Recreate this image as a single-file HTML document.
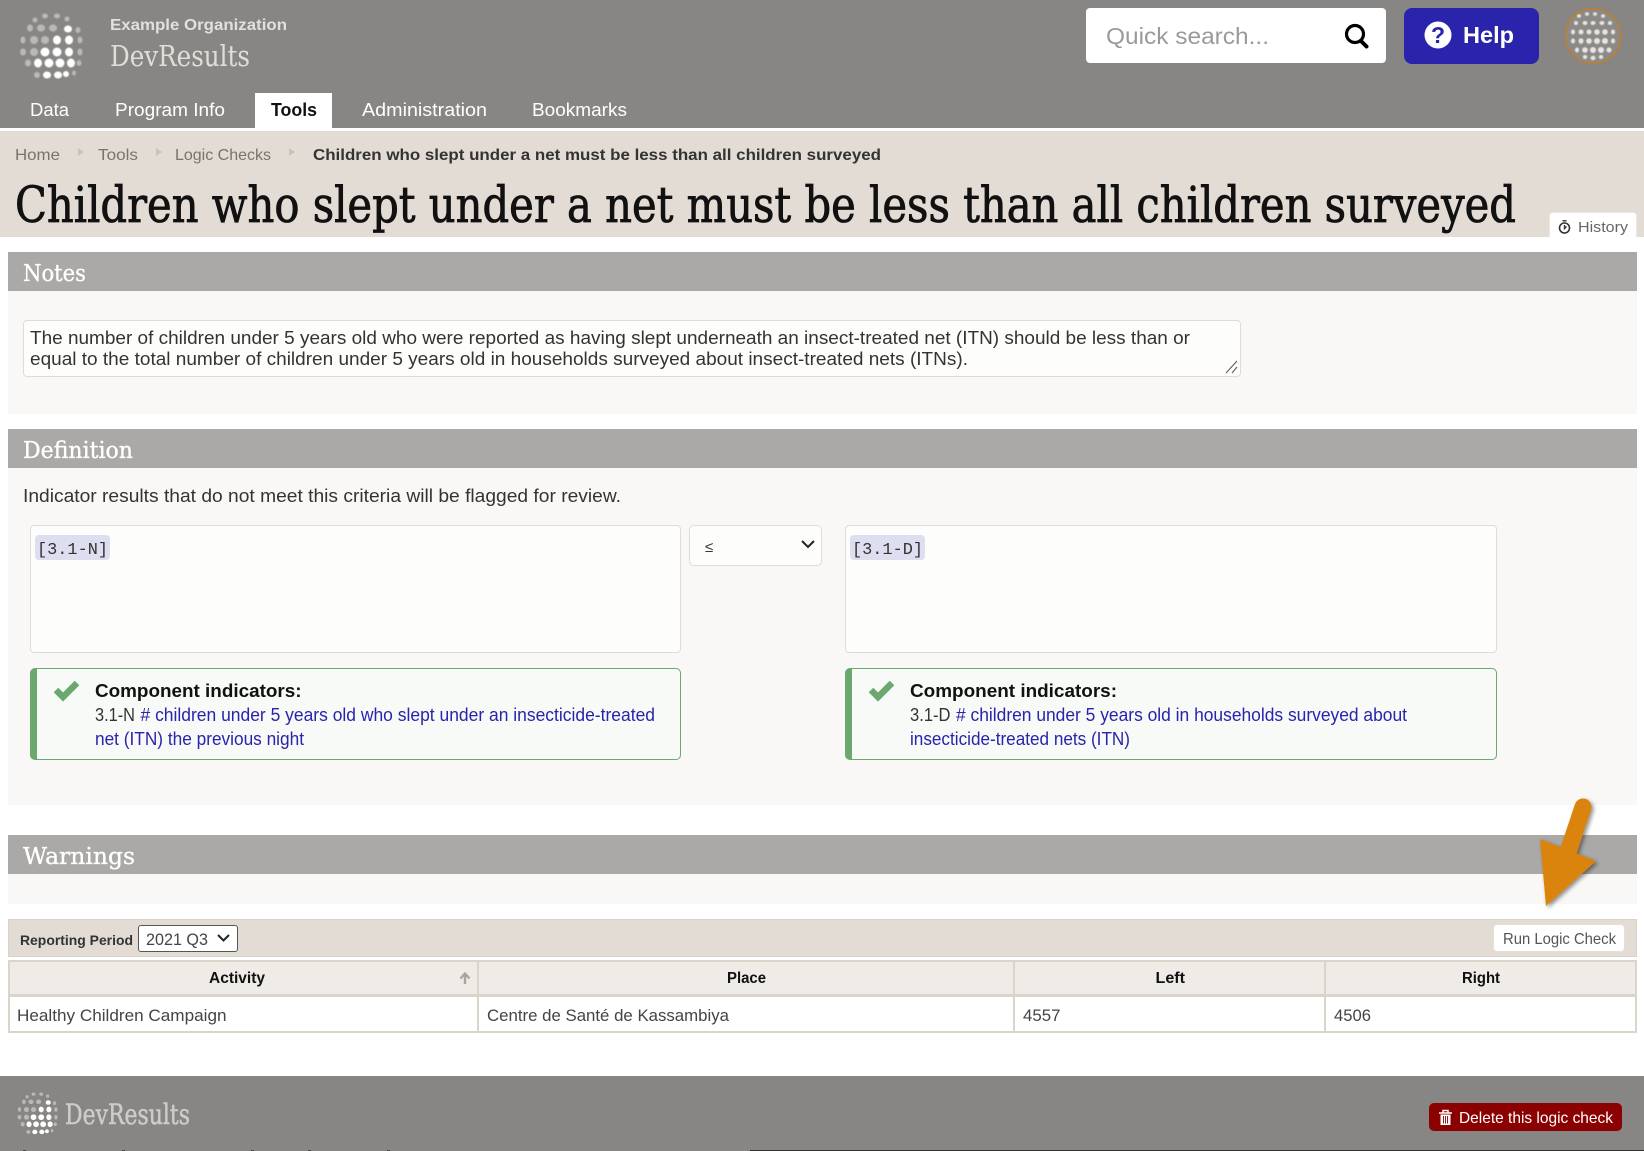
<!DOCTYPE html>
<html lang="en">
<head>
<meta charset="utf-8">
<title>Children who slept under a net must be less than all children surveyed</title>
<style>
html,body{margin:0;padding:0;background:#fff}
body{position:relative;width:1644px;height:1151px;overflow:hidden;font-family:"Liberation Sans",sans-serif}
.b{position:absolute;box-sizing:border-box}
svg.o{position:absolute;left:0;top:0}
text{font-family:"Liberation Sans",sans-serif;white-space:pre}
.s{font-family:"DejaVu Serif","Liberation Serif",serif}
.m{font-family:"Liberation Mono",monospace}
.bd{font-weight:700}
.box{background:#fdfdfb;border:1px solid #e2dbd5;border-radius:4px}
.alert{background:#f8faf8;border:1px solid #6aa86f;border-left:7px solid #6aa86f;border-radius:5px}
.chip{background:#dddef0;border-radius:4px}
.hd{background:#aaa9a7;left:8px;width:1629px}
.bdy{background:#f9f8f6;left:8px;width:1629px}
.th{background:#efebe6;border:2px solid #dad5cb;border-bottom-width:3px}
.td{background:#fff;border:1px solid #dad5cb;border-width:0 2px 2px 2px}
</style>
</head>
<body>
<header class="b" style="left:0;top:0;width:1644px;height:128px;background:#878684"></header>
<div class="b" style="left:255px;top:93px;width:77px;height:35px;background:#fff"></div>
<div class="b" style="left:1086px;top:8px;width:300px;height:55px;background:#fff;border-radius:4px"></div>
<div class="b" style="left:1404px;top:8px;width:135px;height:56px;background:#2a23ac;border-radius:8px"></div>

<div class="b" style="left:0;top:131px;width:1644px;height:106px;background:#e2dcd5"></div>
<div class="b" style="left:1549px;top:212px;width:88px;height:25px;background:#fff;border:1px solid #ece7e2;border-bottom:0;border-radius:4px 4px 0 0"></div>

<div class="b bdy" style="top:291px;height:123px"></div>
<div class="b hd" style="top:252px;height:39px"></div>
<div class="b box" style="left:23px;top:320px;width:1218px;height:57px"></div>

<div class="b bdy" style="top:468px;height:337px"></div>
<div class="b hd" style="top:429px;height:39px"></div>
<div class="b box" style="left:30px;top:525px;width:651px;height:128px"></div>
<div class="b box" style="left:689px;top:525px;width:133px;height:41px;border-radius:5px"></div>
<div class="b box" style="left:845px;top:525px;width:652px;height:128px"></div>
<div class="b chip" style="left:35px;top:535px;width:75px;height:25px"></div>
<div class="b chip" style="left:850px;top:535px;width:75px;height:25px"></div>
<div class="b alert" style="left:30px;top:668px;width:651px;height:92px"></div>
<div class="b alert" style="left:845px;top:668px;width:652px;height:92px"></div>

<div class="b bdy" style="top:874px;height:30px"></div>
<div class="b hd" style="top:835px;height:39px"></div>

<div class="b" style="left:8px;top:919px;width:1629px;height:38px;background:#e2dcd5;border:1px solid #d8d2c8"></div>
<div class="b" style="left:138px;top:925px;width:100px;height:27px;background:#fff;border:1px solid #555;border-radius:3px"></div>
<div class="b" style="left:1493px;top:924px;width:132px;height:28px;background:#fff;border:1px solid #e5dfd9;border-radius:4px"></div>

<div class="b th" style="left:8px;top:960px;width:471px;height:37px"></div>
<div class="b th" style="left:477px;top:960px;width:538px;height:37px"></div>
<div class="b th" style="left:1013px;top:960px;width:313px;height:37px"></div>
<div class="b th" style="left:1324px;top:960px;width:313px;height:37px"></div>
<div class="b td" style="left:8px;top:997px;width:471px;height:36px"></div>
<div class="b td" style="left:477px;top:997px;width:538px;height:36px"></div>
<div class="b td" style="left:1013px;top:997px;width:313px;height:36px"></div>
<div class="b td" style="left:1324px;top:997px;width:313px;height:36px"></div>

<footer class="b" style="left:0;top:1076px;width:1644px;height:75px;background:#878684"></footer>
<div class="b" style="left:750px;top:1150px;width:894px;height:1px;background:#333"></div>
<div class="b" style="left:1429px;top:1103px;width:193px;height:28px;background:#8b0000;border-radius:5px"></div>

<svg class="o" width="1644" height="1151" viewBox="0 0 1644 1151" xmlns="http://www.w3.org/2000/svg">
<defs>
<filter id="sh" x="-30%" y="-30%" width="170%" height="170%"><feDropShadow dx="2" dy="2" stdDeviation="2" flood-color="#000" flood-opacity=".45"/></filter>
<filter id="soft" x="-10%" y="-10%" width="120%" height="120%"><feGaussianBlur stdDeviation=".55"/></filter>
<g id="globe" fill="#fff" filter="url(#soft)">
<g opacity=".42">
<ellipse cx="-17" cy="-27" rx="2.5" ry="2.5"/><ellipse cx="-7" cy="-31" rx="3" ry="2.5"/><ellipse cx="5" cy="-31" rx="3" ry="2.5"/><ellipse cx="15" cy="-28" rx="2.5" ry="2.5"/>
<ellipse cx="-22" cy="-19" rx="3" ry="3.5"/><ellipse cx="-11" cy="-19" rx="4" ry="3.5"/><ellipse cx="1" cy="-19" rx="4" ry="3.5"/><ellipse cx="26" cy="-17" rx="2.5" ry="3"/>
<ellipse cx="-29" cy="-7" rx="2.5" ry="3.5"/><ellipse cx="-18" cy="-7" rx="4" ry="4"/><ellipse cx="-7" cy="-7" rx="4" ry="4"/><ellipse cx="28" cy="-7" rx="2.5" ry="3.5"/>
<ellipse cx="-29" cy="5" rx="3" ry="3.5"/><ellipse cx="-18" cy="5" rx="4" ry="4"/><ellipse cx="28" cy="5" rx="2.5" ry="3.5"/>
<ellipse cx="-24" cy="16" rx="3" ry="3.5"/><ellipse cx="27" cy="16" rx="2.5" ry="3"/>
<ellipse cx="-15" cy="28" rx="3" ry="3"/><ellipse cx="22" cy="26" rx="2" ry="2.5"/>
</g>
<ellipse cx="16" cy="-18" rx="4" ry="3.5"/><ellipse cx="5" cy="-7" rx="4" ry="4.5"/><ellipse cx="17" cy="-7" rx="4" ry="4.5"/>
<ellipse cx="-7" cy="5" rx="4.5" ry="4.5"/><ellipse cx="5" cy="5" rx="4.5" ry="4.5"/><ellipse cx="17" cy="5" rx="4" ry="4.5"/>
<ellipse cx="-14" cy="16" rx="4" ry="4.5"/><ellipse cx="-3" cy="16" rx="4.5" ry="4.5"/><ellipse cx="8" cy="16" rx="4.5" ry="4.5"/><ellipse cx="19" cy="16" rx="4" ry="4.5"/>
<ellipse cx="-5" cy="28" rx="4" ry="3.5"/><ellipse cx="6" cy="28" rx="4" ry="3.5"/><ellipse cx="14" cy="27" rx="3" ry="3"/>
</g>
<g id="globe2" fill="#e8e6e3" filter="url(#soft)">
<ellipse cx="-6" cy="-22" rx="2" ry="1.8"/><ellipse cx="2" cy="-22" rx="2" ry="1.8"/><ellipse cx="10" cy="-20" rx="2" ry="1.8"/><ellipse cx="-14" cy="-20" rx="2" ry="1.8"/>
<ellipse cx="-17" cy="-13" rx="2" ry="2"/><ellipse cx="-8" cy="-13" rx="2.5" ry="2"/><ellipse cx="0" cy="-13" rx="2.5" ry="2"/><ellipse cx="9" cy="-13" rx="2.5" ry="2"/><ellipse cx="17" cy="-13" rx="2" ry="2"/>
<ellipse cx="-20" cy="-4" rx="2" ry="2.5"/><ellipse cx="-12" cy="-4" rx="2.5" ry="2.5"/><ellipse cx="-4" cy="-4" rx="2.5" ry="2.5"/><ellipse cx="4" cy="-4" rx="2.8" ry="2.8"/><ellipse cx="12" cy="-4" rx="2.8" ry="2.8"/><ellipse cx="20" cy="-4" rx="2" ry="2.5"/>
<ellipse cx="-20" cy="5" rx="2" ry="2.5"/><ellipse cx="-12" cy="5" rx="2.5" ry="2.8"/><ellipse cx="-4" cy="5" rx="2.8" ry="2.8"/><ellipse cx="4" cy="5" rx="3" ry="3"/><ellipse cx="12" cy="5" rx="3" ry="3"/><ellipse cx="20" cy="5" rx="2" ry="2.5"/>
<ellipse cx="-16" cy="14" rx="2" ry="2.5"/><ellipse cx="-8" cy="14" rx="2.8" ry="2.8"/><ellipse cx="0" cy="14" rx="3" ry="3"/><ellipse cx="8" cy="14" rx="3" ry="3"/><ellipse cx="16" cy="14" rx="2.5" ry="2.5"/>
<ellipse cx="-8" cy="21" rx="2.2" ry="2"/><ellipse cx="0" cy="22" rx="2.5" ry="2.2"/><ellipse cx="8" cy="21" rx="2.2" ry="2"/>
</g>
</defs>

<!-- header -->
<use href="#globe" transform="translate(52 47)"/>
<text x="110" y="30" font-size="16" class="bd" fill="#e2e0de" textLength="177" lengthAdjust="spacingAndGlyphs">Example Organization</text>
<text x="110" y="66" font-size="29" class="s" fill="#e2ddd7" textLength="140" lengthAdjust="spacingAndGlyphs">DevResults</text>
<g font-size="18" fill="#fff">
<text x="30" y="116" textLength="39" lengthAdjust="spacingAndGlyphs">Data</text>
<text x="115" y="116" textLength="110" lengthAdjust="spacingAndGlyphs">Program Info</text>
<text x="271" y="116" class="bd" fill="#111" textLength="46" lengthAdjust="spacingAndGlyphs">Tools</text>
<text x="362" y="116" textLength="125" lengthAdjust="spacingAndGlyphs">Administration</text>
<text x="532" y="116" textLength="95" lengthAdjust="spacingAndGlyphs">Bookmarks</text>
</g>
<text x="1106" y="44" font-size="23" fill="#9a9a9a" textLength="163" lengthAdjust="spacingAndGlyphs">Quick search...</text>
<circle cx="1355" cy="34" r="8.5" fill="none" stroke="#000" stroke-width="3.2"/>
<path d="M1361 41 L1366.5 46.5" stroke="#000" stroke-width="4" stroke-linecap="round"/>
<circle cx="1438" cy="35" r="13.5" fill="#fff"/>
<text x="1438" y="43" font-size="23" class="bd" fill="#2a23ac" text-anchor="middle">?</text>
<text x="1463" y="43" font-size="23" class="bd" fill="#fff" textLength="51" lengthAdjust="spacingAndGlyphs">Help</text>
<circle cx="1593" cy="36" r="27.5" fill="#8b8a87" stroke="#c77d1e" stroke-width="1.3"/>
<use href="#globe2" transform="translate(1593 36)"/>

<!-- breadcrumb -->
<g font-size="16" fill="#77736e">
<text x="15" y="160" textLength="45" lengthAdjust="spacingAndGlyphs">Home</text>
<text x="98" y="160" textLength="40" lengthAdjust="spacingAndGlyphs">Tools</text>
<text x="175" y="160" textLength="96" lengthAdjust="spacingAndGlyphs">Logic Checks</text>
</g>
<g fill="#c9c3bb"><path d="M78 148l6 4-6 4z"/><path d="M156 148l6 4-6 4z"/><path d="M289 148l6 4-6 4z"/></g>
<text x="313" y="160" font-size="16" class="bd" fill="#333" textLength="568" lengthAdjust="spacingAndGlyphs">Children who slept under a net must be less than all children surveyed</text>
<text x="15" y="222" font-size="50" class="s" fill="#111" stroke="#111" stroke-width=".85" textLength="1501" lengthAdjust="spacingAndGlyphs">Children who slept under a net must be less than all children surveyed</text>
<circle cx="1564.5" cy="228" r="5" fill="none" stroke="#333" stroke-width="1.6"/>
<path d="M1562.5 220.8h4M1564.5 225v3.5l2-2" fill="none" stroke="#333" stroke-width="1.4"/>
<text x="1578" y="232" font-size="15" fill="#666" textLength="50" lengthAdjust="spacingAndGlyphs">History</text>

<!-- section heads -->
<g font-size="23" fill="#fff" stroke="#fff" stroke-width=".35">
<text x="23" y="281" class="s" textLength="63" lengthAdjust="spacingAndGlyphs">Notes</text>
<text x="23" y="458" class="s" textLength="110" lengthAdjust="spacingAndGlyphs">Definition</text>
<text x="23" y="864" class="s" textLength="112" lengthAdjust="spacingAndGlyphs">Warnings</text>
</g>

<!-- notes -->
<g font-size="18" fill="#333">
<text x="30" y="344" textLength="1160" lengthAdjust="spacingAndGlyphs">The number of children under 5 years old who were reported as having slept underneath an insect-treated net (ITN) should be less than or</text>
<text x="30" y="365" textLength="938" lengthAdjust="spacingAndGlyphs">equal to the total number of children under 5 years old in households surveyed about insect-treated nets (ITNs).</text>
<text x="23" y="502" textLength="598" lengthAdjust="spacingAndGlyphs">Indicator results that do not meet this criteria will be flagged for review.</text>
</g>
<path d="M1226 373l11-12M1232 373l5-6" stroke="#555" stroke-width="1" fill="none"/>

<!-- definition -->
<g font-size="17" fill="#333">
<text x="37" y="554" class="m" textLength="71" lengthAdjust="spacingAndGlyphs">[3.1-N]</text>
<text x="852" y="554" class="m" textLength="71" lengthAdjust="spacingAndGlyphs">[3.1-D]</text>
</g>
<text x="705" y="552" font-size="15" fill="#333">≤</text>
<path d="M802 541l6 6 6-6" fill="none" stroke="#222" stroke-width="2"/>

<g fill="none" stroke="#6aa86f" stroke-width="6.5"><path d="M56 690l7 7 14-14"/><path d="M871 690l7 7 14-14"/></g>
<g font-size="18" class="bd" fill="#111">
<text x="95" y="697" textLength="206.5" lengthAdjust="spacingAndGlyphs">Component indicators:</text>
<text x="910" y="697" textLength="207" lengthAdjust="spacingAndGlyphs">Component indicators:</text>
</g>
<g font-size="18" fill="#2a23ac">
<text x="95" y="721" fill="#333" textLength="40" lengthAdjust="spacingAndGlyphs">3.1-N</text>
<text x="140.5" y="721" textLength="514.5" lengthAdjust="spacingAndGlyphs"># children under 5 years old who slept under an insecticide-treated</text>
<text x="95" y="745" textLength="209" lengthAdjust="spacingAndGlyphs">net (ITN) the previous night</text>
<text x="910" y="721" fill="#333" textLength="40.5" lengthAdjust="spacingAndGlyphs">3.1-D</text>
<text x="956" y="721" textLength="451" lengthAdjust="spacingAndGlyphs"># children under 5 years old in households surveyed about</text>
<text x="910" y="745" textLength="220" lengthAdjust="spacingAndGlyphs">insecticide-treated nets (ITN)</text>
</g>

<!-- toolbar -->
<text x="20" y="945" font-size="14" class="bd" fill="#333" textLength="113" lengthAdjust="spacingAndGlyphs">Reporting Period</text>
<text x="146" y="945" font-size="17" fill="#444" textLength="62" lengthAdjust="spacingAndGlyphs">2021 Q3</text>
<path d="M218 935l5.5 5.5 5.5-5.5" fill="none" stroke="#222" stroke-width="2"/>
<text x="1503" y="944" font-size="16" fill="#555" textLength="113" lengthAdjust="spacingAndGlyphs">Run Logic Check</text>

<!-- table -->
<g font-size="16" class="bd" fill="#111">
<text x="209" y="983" textLength="56" lengthAdjust="spacingAndGlyphs">Activity</text>
<text x="727" y="983" textLength="39" lengthAdjust="spacingAndGlyphs">Place</text>
<text x="1155.5" y="983" textLength="29.5" lengthAdjust="spacingAndGlyphs">Left</text>
<text x="1462" y="983" textLength="38" lengthAdjust="spacingAndGlyphs">Right</text>
</g>
<path d="M465 984v-10M460.5 978.5l4.5-5 4.5 5" fill="none" stroke="#aaa69f" stroke-width="2.4"/>
<g font-size="17" fill="#444">
<text x="17" y="1021" textLength="209.5" lengthAdjust="spacingAndGlyphs">Healthy Children Campaign</text>
<text x="487" y="1021" textLength="242" lengthAdjust="spacingAndGlyphs">Centre de Santé de Kassambiya</text>
<text x="1023" y="1021" textLength="37.5" lengthAdjust="spacingAndGlyphs">4557</text>
<text x="1334" y="1021" textLength="37" lengthAdjust="spacingAndGlyphs">4506</text>
</g>

<!-- footer -->
<use href="#globe" transform="translate(38 1114) scale(.64)"/>
<text x="65" y="1124" font-size="28" class="s" fill="#cfccc8" stroke="#cfccc8" stroke-width=".5" textLength="125" lengthAdjust="spacingAndGlyphs">DevResults</text>
<path d="M1439 1113h13M1443 1113v-2.5h5v2.5" fill="none" stroke="#fff" stroke-width="1.5"/>
<path d="M1440.5 1114.5h10v10.5h-10z" fill="#fff"/>
<path d="M1443.5 1116v7.5M1445.5 1116v7.5M1447.5 1116v7.5" stroke="#8b0000" stroke-width=".9"/>
<text x="1459" y="1123" font-size="16" fill="#fff" textLength="154" lengthAdjust="spacingAndGlyphs">Delete this logic check</text>
<path d="M23 1150.5h3M122 1150.5h3M251 1150.5h3M308 1150.5h3M387 1150.5h3" stroke="#444" stroke-width="1"/>

<!-- arrow -->
<g filter="url(#sh)">
<path d="M1583 807 L1568 852" stroke="#db8410" stroke-width="17" stroke-linecap="round" fill="none"/>
<path d="M1540 839 L1596 861 L1546 906 Z" fill="#db8410"/>
</g>
</svg>
</body>
</html>
